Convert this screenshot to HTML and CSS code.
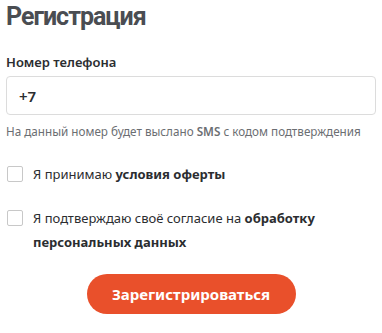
FILE: index.html
```html
<!DOCTYPE html>
<html lang="ru">
<head>
  <meta charset="UTF-8">
  <title>Регистрация</title>
  <link rel="stylesheet" href="styles.css">
</head>
<body>
<form class="register">
  <h1>Регистрация</h1>

  <label class="field-label" for="phone">Номер телефона</label>
  <input type="text" id="phone" class="field" value="+7">
  <p class="hint">На данный номер будет выслано <b>SMS</b> с кодом подтверждения</p>

  <label class="check">
    <input type="checkbox">
    <span class="box"></span>
    <span class="check-text">Я принимаю <b>условия оферты</b></span>
  </label>

  <label class="check">
    <input type="checkbox">
    <span class="box"></span>
    <span class="check-text">Я подтверждаю своё согласие на <b>обработку персональных данных</b></span>
  </label>

  <div class="actions">
    <button type="submit" class="button">Зарегистрироваться</button>
  </div>
</form>
</body>
</html>
```

FILE: styles.css
```css
body {
  margin: 0;
  background: #fff;
  font-family: "Noto Sans", Arial, sans-serif;
  color: #2b2d30;
}
.register {
  padding: 0 6px;
}
h1 {
  margin: 0;
  padding-top: 2px;
  font-family: Roboto, "Noto Sans", sans-serif;
  font-size: 25px;
  line-height: 30px;
  font-weight: 700;
  letter-spacing: -1px;
  color: #4a4d52;
}
.field-label {
  display: block;
  margin-top: 21px;
  font-size: 13px;
  line-height: 18px;
  font-weight: 600;
}
.field {
  display: block;
  box-sizing: border-box;
  width: 100%;
  height: 39px;
  margin-top: 5px;
  padding: 0 12px;
  border: 1px solid #dcdcdc;
  border-radius: 4px;
  font-family: inherit;
  font-size: 15px;
  font-weight: 600;
  color: #2b2d30;
}
.hint {
  margin: 8px 0 0;
  font-size: 11.7px;
  line-height: 16px;
  color: #6b6e72;
}
.hint b {
  font-weight: 600;
}
.check {
  display: flex;
  align-items: flex-start;
  gap: 10px;
  margin-top: 20px;
  font-size: 13px;
  line-height: 24px;
  color: #2b2d30;
}
.hint + .check {
  margin-top: 23px;
}
.check input {
  display: none;
}
.check .box {
  flex: none;
  box-sizing: border-box;
  width: 16px;
  height: 16px;
  margin: 4px 0 0 1px;
  border: 1px solid #c8c8c8;
  border-radius: 2px;
}
.check-text b {
  font-weight: 700;
}
.actions {
  display: flex;
  justify-content: center;
  margin-top: 20px;
}
.button {
  width: 209px;
  height: 40px;
  border: none;
  border-radius: 20px;
  background: #e9502b;
  color: #fff;
  font-family: inherit;
  font-size: 15px;
  font-weight: 700;
  cursor: pointer;
}
```
